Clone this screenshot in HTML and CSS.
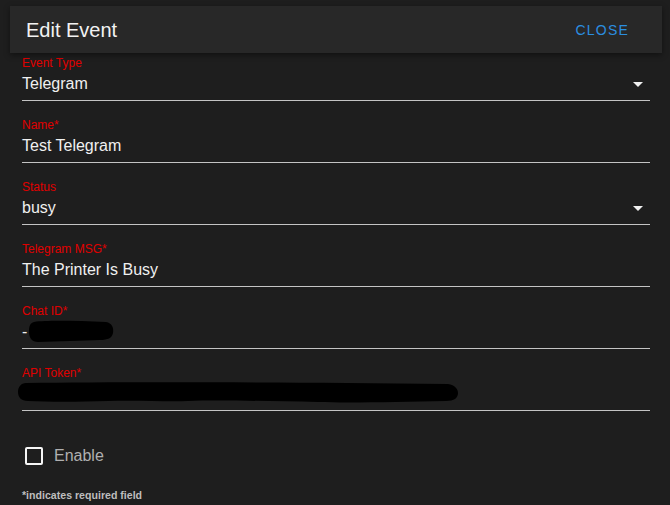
FILE: index.html
```html
<!DOCTYPE html>
<html>
<head>
<meta charset="utf-8">
<link rel="stylesheet" href="styles.css">
</head>
<body>
<div class="dialog">
  <header class="bar">
    <h1 class="title">Edit Event</h1>
    <span class="close">CLOSE</span>
  </header>
  <form class="form">
    <div class="field field-first">
      <label class="label">Event Type</label>
      <div class="value select"><span>Telegram</span><span class="arrow"></span></div>
    </div>
    <div class="field">
      <label class="label">Name*</label>
      <div class="value">Test Telegram</div>
    </div>
    <div class="field">
      <label class="label">Status</label>
      <div class="value select"><span>busy</span><span class="arrow"></span></div>
    </div>
    <div class="field">
      <label class="label">Telegram MSG*</label>
      <div class="value">The Printer Is Busy</div>
    </div>
    <div class="field">
      <label class="label">Chat ID*</label>
      <div class="value redacted-row"><span>-</span>
        <svg class="blob blob-chat" width="86" height="22" viewBox="0 0 86 22"><path d="M6 2 C20 0 50 1 78 2 C84 3 86 8 85 13 C84 18 80 20 72 20 C55 21 30 21 10 22 C4 22 1 18 1 12 C1 6 2 3 6 2 Z" fill="#000"/></svg>
      </div>
    </div>
    <div class="field">
      <label class="label">API Token*</label>
      <div class="value redacted-row">
        <svg class="blob blob-token" width="441" height="23" viewBox="0 0 441 23"><path d="M8 2 C100 1 250 1 430 3 C437 4 440 8 440 12 C440 17 436 20 428 20 C380 21 330 22 300 21 C250 20 200 19 170 20 C150 21 120 19 90 20 C60 21 30 21 10 20 C3 20 0 16 0 11 C0 6 3 2 8 2 Z" fill="#000"/></svg>
      </div>
    </div>
    <div class="check-row">
      <span class="checkbox"></span>
      <span class="check-label">Enable</span>
    </div>
    <p class="note">*indicates required field</p>
  </form>
</div>
</body>
</html>
```
FILE: styles.css
```css
html, body {
  margin: 0;
  padding: 0;
  background: #1e1e1e;
  font-family: "Liberation Sans", Arial, sans-serif;
  color: #eeeeee;
}
.dialog {
  width: 670px;
  height: 505px;
  overflow: hidden;
}
.bar {
  margin: 6px 8px 0 10px;
  height: 47px;
  background: #282828;
  box-shadow: 0 2px 6px rgba(0,0,0,0.45);
  display: flex;
  align-items: center;
  justify-content: space-between;
  padding: 0 33px 0 16px;
  position: relative;
  z-index: 1;
}
.title {
  margin: 0;
  font-size: 20px;
  font-weight: normal;
  color: #f2f2f2;
  line-height: 24px;
  padding-top: 1px;
}
.close {
  font-size: 14px;
  letter-spacing: 1.2px;
  color: #2b8ee0;
  padding-top: 1px;
}
.form {
  margin: 0 20px 0 22px;
}
.field {
  padding: 17px 0 3px 0;
  border-bottom: 1px solid #c4c4c4;
}
.field-first {
  padding-top: 3px;
}
.label {
  display: block;
  font-size: 12px;
  line-height: 14px;
  height: 15px;
  color: #e00000;
}
.value {
  font-size: 16px;
  line-height: 26px;
  height: 26px;
  color: #f0f0f0;
}
.select {
  display: flex;
  align-items: center;
  justify-content: space-between;
}
.arrow {
  width: 0;
  height: 0;
  border-left: 5px solid transparent;
  border-right: 5px solid transparent;
  border-top: 5px solid #f0f0f0;
  margin-right: 7px;
  margin-top: 0;
}
.redacted-row {
  display: flex;
  align-items: center;
}
.blob {
  display: block;
}
.blob-chat {
  margin-left: 1px;
  margin-top: -2px;
}
.blob-token {
  margin-left: -4px;
  margin-top: -3px;
}
.check-row {
  display: flex;
  align-items: center;
  margin-top: 36px;
  padding-left: 3px;
  height: 18px;
}
.checkbox {
  width: 14px;
  height: 14px;
  border: 2px solid #f5f5f5;
  border-radius: 2px;
}
.check-label {
  margin-left: 11px;
  font-size: 16px;
  color: #b0b0b0;
  line-height: 18px;
}
.note {
  margin: 24px 0 0 0;
  font-size: 10.6px;
  font-weight: bold;
  color: #bdbdbd;
  line-height: 12px;
}
```
